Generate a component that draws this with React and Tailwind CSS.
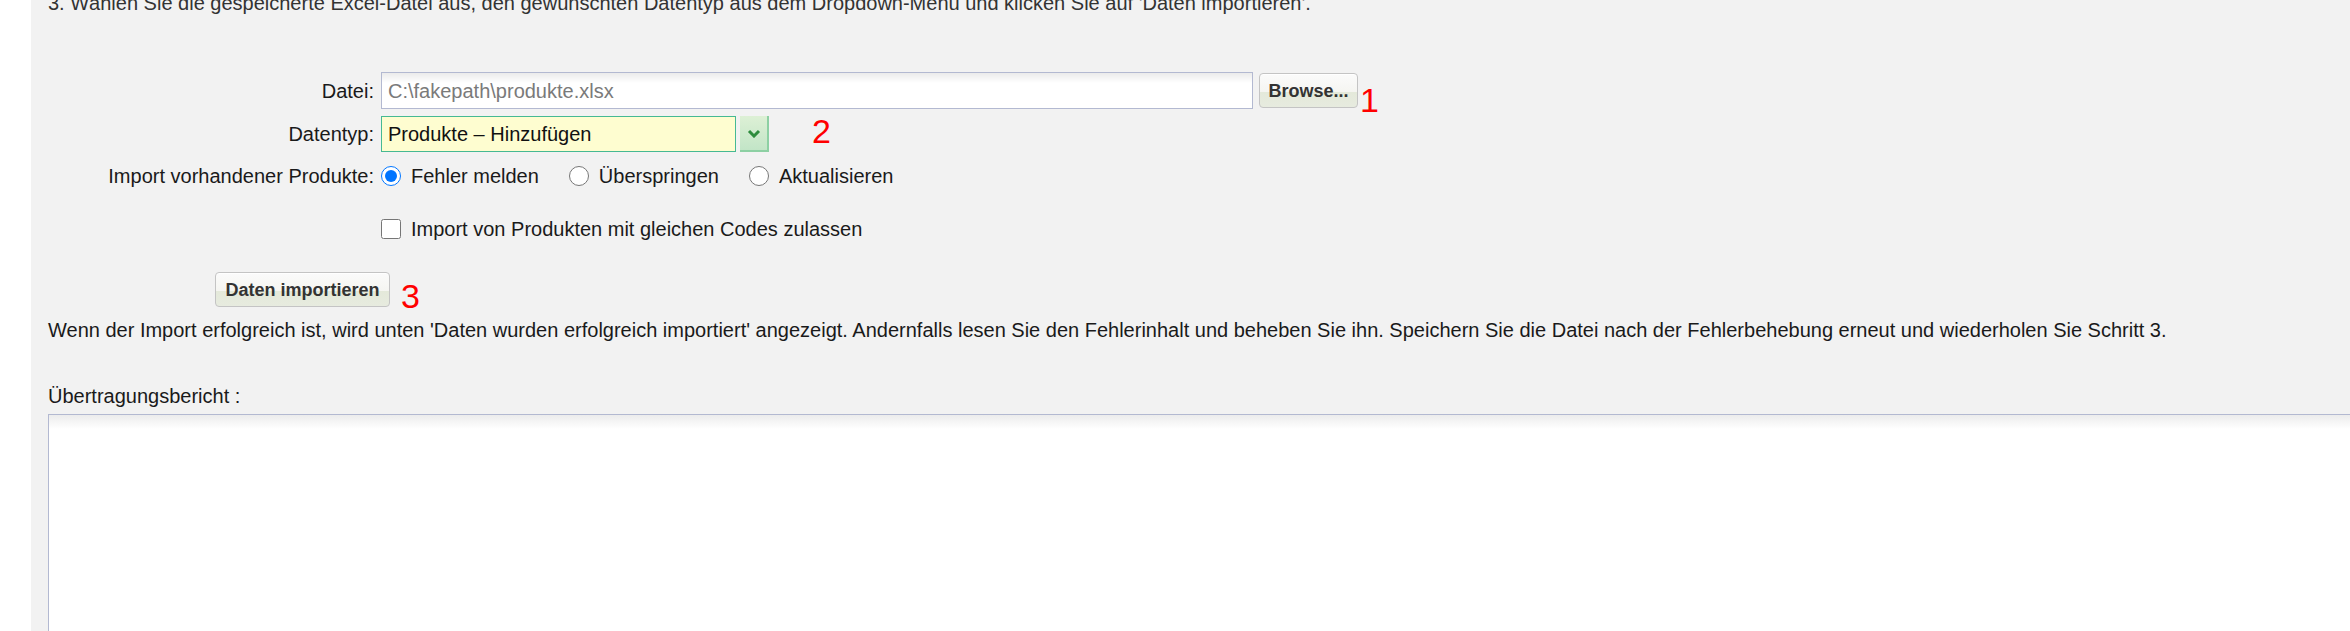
import React from 'react';

const Marker = ({ children, className = '' }) => (
  <span className={`self-start text-[34px] leading-none text-[#ff0000] font-['Liberation_Sans',Arial,sans-serif] ${className}`}>
    {children}
  </span>
);

const App = () => {
  return (
    <div className="flex min-h-[631px] w-full overflow-hidden bg-white font-['Liberation_Sans',Arial,sans-serif] text-[20px] leading-[22px] text-[#1a1a1a]">
      <div className="w-[31px] shrink-0 bg-white" />
      <div className="h-[631px] min-w-0 flex-1 overflow-hidden bg-[#f2f2f2] pl-[17px]">
        <p className="-mt-[8px] whitespace-nowrap text-[#333]">
          3. Wählen Sie die gespeicherte Excel-Datei aus, den gewünschten Datentyp aus dem Dropdown-Menü und klicken Sie auf 'Daten importieren'.
        </p>

        {/* Datei */}
        <div className="mt-[58px] flex h-[37px] items-center">
          <label className="w-[333px] shrink-0 pr-[7px] text-right">Datei:</label>
          <div className="flex h-[37px] w-[872px] items-center border border-[#b3b9d1] bg-[linear-gradient(to_bottom,#ebebeb,#ffffff_10px)] pl-[6px] text-[#7a7a7a]">
            C:\fakepath\produkte.xlsx
          </div>
          <button className="ml-[6px] h-[35px] w-[99px] rounded-[4px] border border-[#c4c4c4] bg-[linear-gradient(to_bottom,#fbfbfb_0%,#f5f5f1_55%,#e4e9da_56%,#e7ebdf_100%)] text-[18px] font-bold text-[#333] shadow-[inset_0_1px_0_#ffffff]">
            Browse...
          </button>
          <Marker className="ml-[2px] mt-[11px]">1</Marker>
        </div>

        {/* Datentyp */}
        <div className="mt-[7px] flex h-[36px] items-center">
          <label className="w-[333px] shrink-0 pr-[7px] text-right">Datentyp:</label>
          <div className="flex h-[36px] w-[355px] items-center border border-[#46b993] bg-[#fefdd0] pl-[6px] text-[#111]">
            Produkte – Hinzufügen
          </div>
          <div className="ml-[4px] flex h-[36px] w-[29px] items-center justify-center border-r-2 border-b-2 border-[#8dd0a3] bg-[linear-gradient(to_bottom,#ddf0d5,#c2e5c7)]">
            <svg width="14" height="9" viewBox="0 0 14 9">
              <polyline points="2,2 7,7 12,2" fill="none" stroke="#2e8c3d" strokeWidth="3" />
            </svg>
          </div>
          <Marker className="ml-[43px] -mt-[2px]">2</Marker>
        </div>

        {/* Import vorhandener Produkte */}
        <div className="mt-[11px] flex h-[26px] items-center">
          <label className="w-[333px] shrink-0 pr-[7px] text-right">Import vorhandener Produkte:</label>
          <label className="flex items-center">
            <input type="radio" name="mode" defaultChecked className="m-0 h-5 w-5" />
            <span className="ml-[10px]">Fehler melden</span>
          </label>
          <label className="ml-[30px] flex items-center">
            <input type="radio" name="mode" className="m-0 h-5 w-5" />
            <span className="ml-[10px]">Überspringen</span>
          </label>
          <label className="ml-[30px] flex items-center">
            <input type="radio" name="mode" className="m-0 h-5 w-5" />
            <span className="ml-[10px]">Aktualisieren</span>
          </label>
        </div>

        {/* Checkbox */}
        <div className="mt-[27px] flex h-[26px] items-center">
          <div className="w-[333px] shrink-0" />
          <label className="flex items-center">
            <input type="checkbox" className="m-0 h-5 w-5" />
            <span className="ml-[10px]">Import von Produkten mit gleichen Codes zulassen</span>
          </label>
        </div>

        {/* Daten importieren */}
        <div className="mt-[30px] flex h-[35px] items-center">
          <button className="ml-[167px] h-[35px] w-[175px] rounded-[4px] border border-[#c4c4c4] bg-[linear-gradient(to_bottom,#fbfbfb_0%,#f5f5f1_55%,#e4e9da_56%,#e7ebdf_100%)] text-[18px] font-bold text-[#333] shadow-[inset_0_1px_0_#ffffff]">
            Daten importieren
          </button>
          <Marker className="ml-[11px] mt-[7px]">3</Marker>
        </div>

        <p className="mt-[12px] whitespace-nowrap">
          Wenn der Import erfolgreich ist, wird unten 'Daten wurden erfolgreich importiert' angezeigt. Andernfalls lesen Sie den Fehlerinhalt und beheben Sie ihn. Speichern Sie die Datei nach der Fehlerbehebung erneut und wiederholen Sie Schritt 3.
        </p>

        <p className="mt-[44px]">Übertragungsbericht :</p>

        <div className="mt-[7px] h-[300px] w-[2400px] border border-[#b3b9d1] bg-[linear-gradient(to_bottom,#ececec,#ffffff_14px)]" />
      </div>
    </div>
  );
};

export default App;
